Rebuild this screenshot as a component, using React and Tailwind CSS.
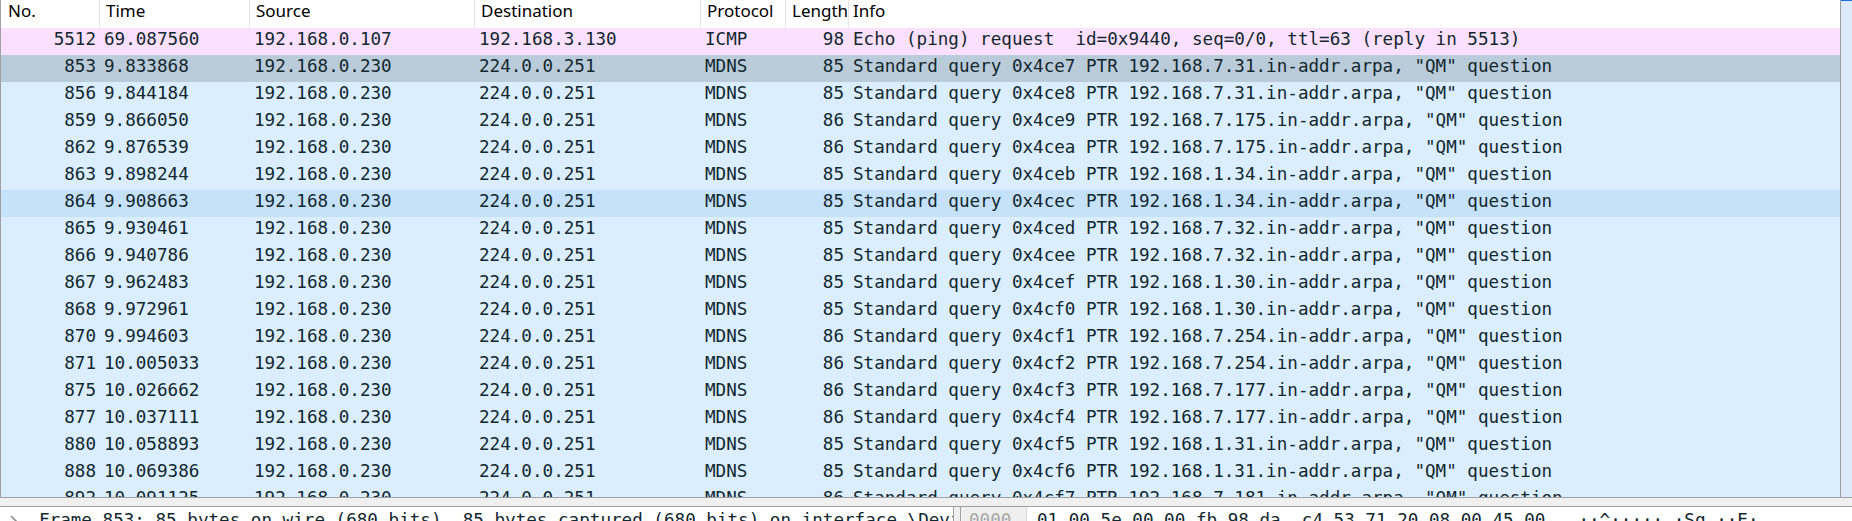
import React from "react";

const rows = [
  ["5512", "69.087560", "192.168.0.107", "192.168.3.130", "ICMP", "98", "Echo (ping) request  id=0x9440, seq=0/0, ttl=63 (reply in 5513)", "icmp"],
  ["853", "9.833868", "192.168.0.230", "224.0.0.251", "MDNS", "85", 'Standard query 0x4ce7 PTR 192.168.7.31.in-addr.arpa, "QM" question', "sel"],
  ["856", "9.844184", "192.168.0.230", "224.0.0.251", "MDNS", "85", 'Standard query 0x4ce8 PTR 192.168.7.31.in-addr.arpa, "QM" question', "udp"],
  ["859", "9.866050", "192.168.0.230", "224.0.0.251", "MDNS", "86", 'Standard query 0x4ce9 PTR 192.168.7.175.in-addr.arpa, "QM" question', "udp"],
  ["862", "9.876539", "192.168.0.230", "224.0.0.251", "MDNS", "86", 'Standard query 0x4cea PTR 192.168.7.175.in-addr.arpa, "QM" question', "udp"],
  ["863", "9.898244", "192.168.0.230", "224.0.0.251", "MDNS", "85", 'Standard query 0x4ceb PTR 192.168.1.34.in-addr.arpa, "QM" question', "udp"],
  ["864", "9.908663", "192.168.0.230", "224.0.0.251", "MDNS", "85", 'Standard query 0x4cec PTR 192.168.1.34.in-addr.arpa, "QM" question', "hover"],
  ["865", "9.930461", "192.168.0.230", "224.0.0.251", "MDNS", "85", 'Standard query 0x4ced PTR 192.168.7.32.in-addr.arpa, "QM" question', "udp"],
  ["866", "9.940786", "192.168.0.230", "224.0.0.251", "MDNS", "85", 'Standard query 0x4cee PTR 192.168.7.32.in-addr.arpa, "QM" question', "udp"],
  ["867", "9.962483", "192.168.0.230", "224.0.0.251", "MDNS", "85", 'Standard query 0x4cef PTR 192.168.1.30.in-addr.arpa, "QM" question', "udp"],
  ["868", "9.972961", "192.168.0.230", "224.0.0.251", "MDNS", "85", 'Standard query 0x4cf0 PTR 192.168.1.30.in-addr.arpa, "QM" question', "udp"],
  ["870", "9.994603", "192.168.0.230", "224.0.0.251", "MDNS", "86", 'Standard query 0x4cf1 PTR 192.168.7.254.in-addr.arpa, "QM" question', "udp"],
  ["871", "10.005033", "192.168.0.230", "224.0.0.251", "MDNS", "86", 'Standard query 0x4cf2 PTR 192.168.7.254.in-addr.arpa, "QM" question', "udp"],
  ["875", "10.026662", "192.168.0.230", "224.0.0.251", "MDNS", "86", 'Standard query 0x4cf3 PTR 192.168.7.177.in-addr.arpa, "QM" question', "udp"],
  ["877", "10.037111", "192.168.0.230", "224.0.0.251", "MDNS", "86", 'Standard query 0x4cf4 PTR 192.168.7.177.in-addr.arpa, "QM" question', "udp"],
  ["880", "10.058893", "192.168.0.230", "224.0.0.251", "MDNS", "85", 'Standard query 0x4cf5 PTR 192.168.1.31.in-addr.arpa, "QM" question', "udp"],
  ["888", "10.069386", "192.168.0.230", "224.0.0.251", "MDNS", "85", 'Standard query 0x4cf6 PTR 192.168.1.31.in-addr.arpa, "QM" question', "udp"],
  ["892", "10.091125", "192.168.0.230", "224.0.0.251", "MDNS", "86", 'Standard query 0x4cf7 PTR 192.168.7.181.in-addr.arpa, "QM" question', "udp"],
];

const bgFor = {
  icmp: "bg-[#fce0ff]",
  sel: "bg-[#bacbd9]",
  udp: "bg-[#daeeff]",
  hover: "bg-[#c6e1fa]",
};

const mono = { fontFamily: '"DejaVu Sans Mono", "Liberation Mono", monospace' };
const sans = { fontFamily: '"Noto Sans", "Open Sans", sans-serif' };

const frameText = "Frame 853: 85 bytes on wire (680 bits), 85 bytes captured (680 bits) on interface \\Device\\NPF_{4A1B}, id 0";

function HeaderCell({ w, children, extra = "" }) {
  return (
    <div className={`${w} h-[28px] shrink-0 border-r border-[#e5e5e5] pl-[6px] leading-[22px] overflow-hidden whitespace-nowrap text-black ${extra}`}>
      {children}
    </div>
  );
}

export default function App() {
  return (
    <div className="w-[1852px] h-[521px] flex flex-col overflow-hidden bg-white">
      <div className="flex h-[497px] shrink-0">
        <div className="w-[1841px] shrink-0 border-l border-r border-[#a0a0a0] flex flex-col overflow-hidden">
          <div className="flex h-[28px] shrink-0 bg-white text-[17px]" style={sans}>
            <HeaderCell w="w-[99px]" extra="pl-[7px]">No.</HeaderCell>
            <HeaderCell w="w-[150px]">Time</HeaderCell>
            <HeaderCell w="w-[225px]">Source</HeaderCell>
            <HeaderCell w="w-[226px]">Destination</HeaderCell>
            <HeaderCell w="w-[85px]">Protocol</HeaderCell>
            <HeaderCell w="w-[63px]" extra="pl-[4px]">Length</HeaderCell>
            <div className="flex-1 h-[28px] pl-[4px] leading-[22px] text-black">Info</div>
          </div>
          <div className="flex-1 overflow-hidden text-[17.6px] text-[#12272e]" style={mono}>
            {rows.map((r) => (
              <div key={r[0]} className={`flex h-[27px] leading-[23px] whitespace-pre ${bgFor[r[7]]}`}>
                <div className="w-[99px] shrink-0 text-right pr-[4px]">{r[0]}</div>
                <div className="w-[150px] shrink-0 pl-[4px]">{r[1]}</div>
                <div className="w-[225px] shrink-0 pl-[4px]">{r[2]}</div>
                <div className="w-[226px] shrink-0 pl-[4px]">{r[3]}</div>
                <div className="w-[85px] shrink-0 pl-[4px]">{r[4]}</div>
                <div className="w-[63px] shrink-0 text-right pr-[5px]">{r[5]}</div>
                <div className="flex-1 pl-[4px] overflow-hidden">{r[6]}</div>
              </div>
            ))}
          </div>
        </div>
        <div className="flex-1 bg-[#dbe9f9] border-t border-[#1a73d9]" />
      </div>
      <div className="h-[10px] shrink-0 border-y border-[#a0a0a0] bg-[#f0f0f0]" />
      <div className="flex flex-1 bg-[#f0f0f0] text-[17.6px] text-[#12272e]" style={mono}>
        <div className="w-[954px] shrink-0 bg-white border-r border-[#a0a0a0] flex items-start pt-[2px] overflow-hidden whitespace-pre">
          <svg className="ml-[9px] mt-[6px] shrink-0" width="10" height="14" viewBox="0 0 10 14">
            <path d="M2 1 L8 7 L2 13" fill="none" stroke="#8a8a8a" strokeWidth="1.6" />
          </svg>
          <span className="ml-[20px] leading-[23px]">{frameText}</span>
        </div>
        <div className="w-[6px] shrink-0" />
        <div className="flex-1 flex items-start bg-white border-l border-[#a0a0a0] whitespace-pre leading-[23px] overflow-hidden">
          <div className="w-[66px] self-stretch shrink-0 bg-[#efefef] border-r border-[#d8d8d8] pl-[8px] pt-[2px] text-[#a8a8a8]">0000</div>
          <div className="pl-[10px] pt-[2px]">{"01 00 5e 00 00 fb 98 da  c4 53 71 20 08 00 45 00"}</div>
          <div className="pl-[33px] pt-[2px]">{"··^····· ·Sq ··E·"}</div>
        </div>
      </div>
    </div>
  );
}
